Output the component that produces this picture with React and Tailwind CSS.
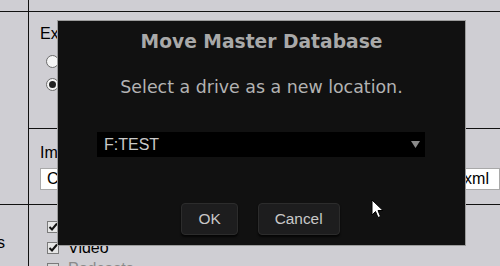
import React from 'react';

function Radio({ checked }) {
  return (
    <span className="w-[13px] h-[13px] rounded-full border border-[#6b6b6b] bg-[#f4f4f4] flex items-center justify-center shrink-0">
      {checked && <span className="w-[7px] h-[7px] rounded-full bg-[#222]" />}
    </span>
  );
}

function Checkbox({ disabled }) {
  return (
    <svg width="12" height="12" viewBox="0 0 12 12" className="shrink-0">
      <rect x="0.5" y="0.5" width="11" height="11" fill={disabled ? '#d8d8d8' : '#e6e6e6'} stroke="#7a7a7a" />
      {!disabled && <path d="M2.5 6 L5 8.5 L10 2.5" fill="none" stroke="#111" strokeWidth="2" />}
    </svg>
  );
}

function Cursor() {
  return (
    <svg width="13" height="20" viewBox="0 0 13 20" className="absolute left-[371px] top-[199px]">
      <path d="M1 1 L1 16 L4.5 12.5 L7 18.5 L9.5 17.5 L7 11.5 L12 11.5 Z" fill="#fff" stroke="#000" strokeWidth="1" />
    </svg>
  );
}

function MoveDialog() {
  return (
    <div className="absolute left-[57px] top-[20px] w-[409px] h-[226px] bg-[#111] border border-[#9c9c9c] flex flex-col items-center">
      <h2 className="mt-[10px] leading-[22px] text-[18.7px] font-bold text-[#a9a9a9]" style={{ fontFamily: '"DejaVu Sans", Verdana, sans-serif' }}>
        Move Master Database
      </h2>
      <p className="mt-[24px] leading-[20px] text-[17.4px] text-[#b3b3b3]" style={{ fontFamily: '"DejaVu Sans", Verdana, sans-serif' }}>
        Select a drive as a new location.
      </p>
      <div className="mt-[35px] self-start ml-[39px] w-[328px] h-[25px] bg-black flex items-center justify-between pl-[7px] pr-[5px]">
        <span className="text-[16px] text-[#c9c9c9]">F:TEST</span>
        <svg width="9" height="7" viewBox="0 0 9 7">
          <polygon points="0,0 9,0 4.5,7" fill="#8a8a8a" />
        </svg>
      </div>
      <div className="mt-[46px] flex gap-[20px] -translate-x-[1px]">
        <button className="h-[32px] px-[16px] rounded-[4px] bg-[#1d1d1e] border border-[#2c2c2c] shadow-[0_2px_2px_rgba(0,0,0,0.7)] text-[15.4px] text-[#c8c8c8]">
          OK
        </button>
        <button className="h-[32px] px-[16px] rounded-[4px] bg-[#1d1d1e] border border-[#2c2c2c] shadow-[0_2px_2px_rgba(0,0,0,0.7)] text-[15.4px] text-[#c8c8c8]">
          Cancel
        </button>
      </div>
    </div>
  );
}

export default function App() {
  return (
    <div className="relative w-[500px] h-[266px] overflow-hidden bg-[#cfced3] text-black" style={{ fontFamily: '"Liberation Sans", Arial, sans-serif' }}>
      {/* top strip */}
      <div className="h-[12px] border-b border-[#111] flex">
        <div className="w-[29px] border-r border-[#111]" />
      </div>

      {/* middle rows */}
      <div className="h-[193px] border-b border-[#111] flex">
        <div className="w-[29px] border-r border-[#111]" />
        <div className="flex-1 flex flex-col">
          <div className="h-[117px] border-b border-[#111] pl-[11px] pt-[13px]">
            <div className="text-[16px] leading-[18px]">Export Options</div>
            <div className="mt-[12px] flex flex-col gap-[10px] pl-[6px]">
              <label className="flex items-center gap-[6px] text-[16px] leading-[13px]">
                <Radio />
                Export to a new folder
              </label>
              <label className="flex items-center gap-[6px] text-[16px] leading-[13px]">
                <Radio checked />
                Export to an existing folder
              </label>
            </div>
          </div>
          <div className="flex-1 pl-[11px] pt-[15px]">
            <div className="text-[16px] leading-[18px]">Import Library File</div>
            <div className="mt-[6px] flex items-center">
              <div className="w-[460px] h-[22px] bg-white border border-[#a9a9a9] flex items-center justify-between pl-[6px] pr-[10px] text-[16px] overflow-hidden whitespace-nowrap">
                <span>C:\Users\Music\iTunes</span>
                <span>iTunes Library.xml</span>
              </div>
            </div>
          </div>
        </div>
      </div>

      {/* bottom row */}
      <div className="flex h-[61px]">
        <div className="w-[29px] border-r border-[#111] overflow-hidden flex justify-end pr-[23px] pt-[29px]">
          <span className="text-[16px] leading-[18px] whitespace-nowrap">Media Types</span>
        </div>
        <div className="flex-1 pl-[18px] pt-[16px] flex flex-col gap-[9px]">
          <label className="flex items-center gap-[9px] text-[16px] leading-[12px]">
            <Checkbox />
            Music
          </label>
          <label className="flex items-center gap-[9px] text-[16px] leading-[12px]">
            <Checkbox />
            Video
          </label>
          <label className="flex items-center gap-[9px] text-[16px] leading-[12px] text-[#8a8a8a]">
            <Checkbox disabled />
            Podcasts
          </label>
        </div>
      </div>

      <MoveDialog />
      <Cursor />
    </div>
  );
}
